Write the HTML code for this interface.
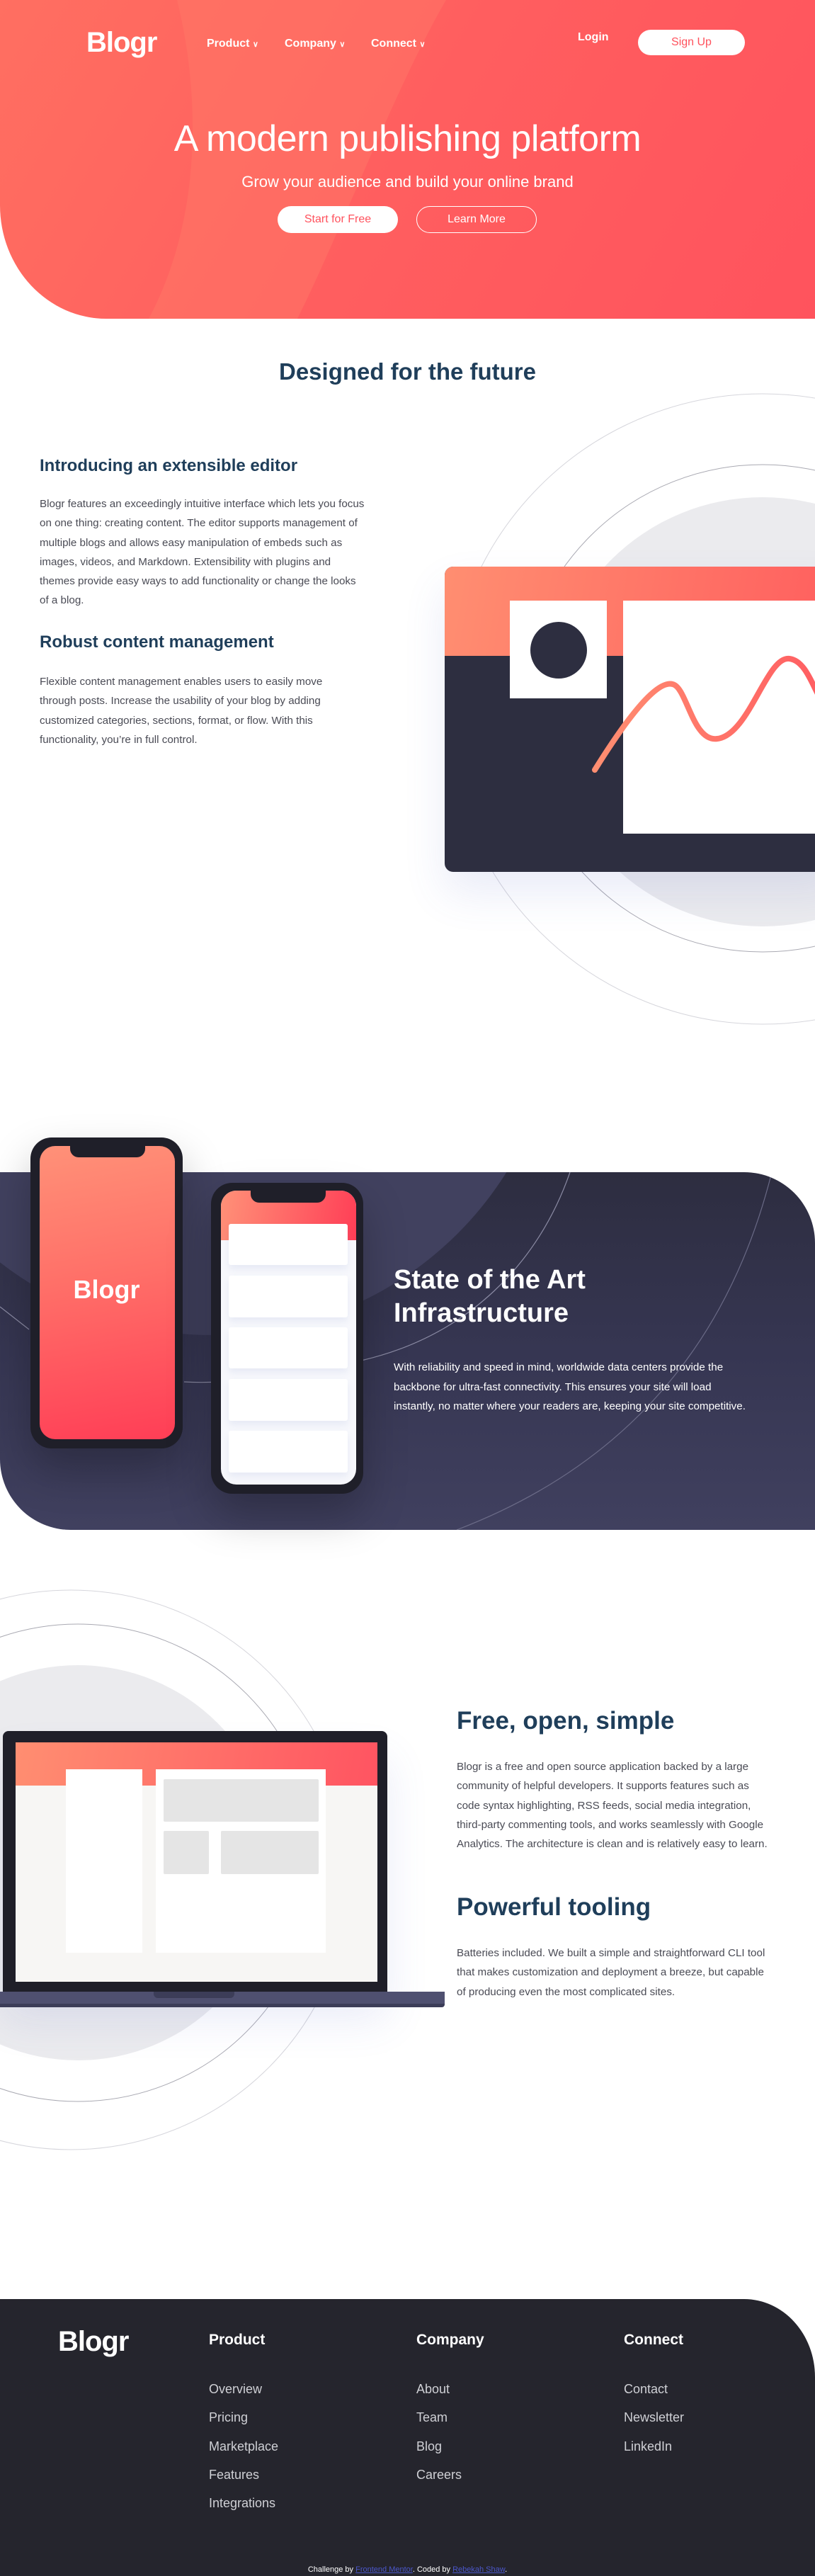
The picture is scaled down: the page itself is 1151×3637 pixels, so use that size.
<!DOCTYPE html>
<html><head><meta charset="utf-8">
<style>
*{margin:0;padding:0;box-sizing:border-box}
html,body{width:1151px;height:3637px;overflow:hidden;background:#fff;font-family:"Liberation Sans",sans-serif}
.a{position:absolute;white-space:nowrap}
#hero{position:absolute;left:0;top:0;width:1151px;height:450px;border-bottom-left-radius:150px 160px;overflow:hidden;background:linear-gradient(120deg,#ff6f61 0%,#ff5e5f 50%,#ff535d 100%)}
.nav{color:#fff;font-weight:bold;font-size:16px}
.h2{color:#1f3e5a;font-weight:bold}
.p{color:#4a4b55;font-size:15.2px;line-height:27.3px;white-space:normal}
.fl{color:#cfd0d5;font-size:18px}
.fh{color:#fff;font-weight:bold;font-size:21px}
</style></head><body>

<div id="hero">
<svg width="1151" height="450" style="position:absolute;left:0;top:0">
<path d="M250 0 C280 120 290 300 210 450 L420 450 C480 330 560 120 630 0 Z" fill="#ff7a68" opacity="0.45"/>
</svg>
<div class="a" style="left:122px;top:38px;color:#fff;font-weight:bold;font-size:40px;letter-spacing:-1px">Blogr</div>
<div class="a nav" style="left:292px;top:53px">Product <span style="font-size:11px">&#8744;</span></div>
<div class="a nav" style="left:402px;top:53px">Company <span style="font-size:11px">&#8744;</span></div>
<div class="a nav" style="left:524px;top:53px">Connect <span style="font-size:11px">&#8744;</span></div>
<div class="a nav" style="left:816px;top:44px">Login</div>
<div class="a" style="left:901px;top:42px;width:151px;height:36px;border-radius:18px;background:#fff;color:#ff525d;font-size:16px;text-align:center;line-height:36px">Sign Up</div>
<div class="a" style="left:0;width:1151px;text-align:center;top:166px;color:#fff;font-size:52px;letter-spacing:-0.5px">A modern publishing platform</div>
<div class="a" style="left:0;width:1151px;text-align:center;top:244px;color:#fff;font-size:22px">Grow your audience and build your online brand</div>
<div class="a" style="left:392px;top:291px;width:170px;height:38px;border-radius:19px;background:#fff;color:#ff525d;font-size:16px;text-align:center;line-height:38px">Start for Free</div>
<div class="a" style="left:588px;top:291px;width:170px;height:38px;border-radius:19px;border:1px solid #fff;color:#fff;font-size:16px;text-align:center;line-height:36px">Learn More</div>
</div>

<!-- section 2 -->
<div class="a h2" style="left:0;width:1151px;text-align:center;top:506px;font-size:33px">Designed for the future</div>
<svg class="a" style="left:0;top:540px" width="1151" height="950">
<circle cx="1077" cy="461" r="445" fill="none" stroke="#d6d6dc" stroke-width="1"/>
<circle cx="1077" cy="460" r="344" fill="none" stroke="#a9a9b2" stroke-width="1"/>
<circle cx="1077" cy="465" r="303" fill="#ebebee"/>
</svg>
<div class="a" style="left:628px;top:800px;width:560px;height:431px;border-radius:12px 0 0 12px;background:#2d2e40;overflow:hidden;box-shadow:0 30px 60px rgba(80,100,200,0.12)">
<div style="position:absolute;left:0;top:0;width:100%;height:126px;background:linear-gradient(100deg,#ff8e71,#ff5e5e)"></div>
<div style="position:absolute;left:92px;top:48px;width:137px;height:138px;background:#fff"></div>
<div style="position:absolute;left:121px;top:78px;width:80px;height:80px;border-radius:50%;background:#2d2e40"></div>
<div style="position:absolute;left:252px;top:48px;width:310px;height:329px;background:#fff"></div>
<svg style="position:absolute;left:0;top:0" width="560" height="431">
<defs><linearGradient id="wg" x1="0" x2="1"><stop offset="0" stop-color="#ff8e71"/><stop offset="1" stop-color="#ff5e62"/></linearGradient></defs>
<path d="M212 287 C260 210 300 160 322 166 C342 170 350 248 385 243 C430 238 455 125 487 130 C510 133 520 170 530 185" fill="none" stroke="url(#wg)" stroke-width="8" stroke-linecap="round"/>
</svg>
</div>
<div class="a h2" style="left:56px;top:644px;font-size:24px">Introducing an extensible editor</div>
<div class="a p" style="left:56px;top:698px;width:460px">Blogr features an exceedingly intuitive interface which lets you focus on one thing: creating content. The editor supports management of multiple blogs and allows easy manipulation of embeds such as images, videos, and Markdown. Extensibility with plugins and themes provide easy ways to add functionality or change the looks of a blog.</div>
<div class="a h2" style="left:56px;top:893px;font-size:24px">Robust content management</div>
<div class="a p" style="left:56px;top:949px;width:440px">Flexible content management enables users to easily move through posts. Increase the usability of your blog by adding customized categories, sections, format, or flow. With this functionality, you’re in full control.</div>

<!-- section 3 -->
<div class="a" style="left:0;top:1655px;width:1151px;height:505px;border-radius:0 100px 0 100px;overflow:hidden;background:linear-gradient(180deg,#2d2d40 0%,#363652 50%,#40405f 100%)">
<svg width="1151" height="505" style="position:absolute;left:0;top:0">
<circle cx="300" cy="-260" r="490" fill="#41415f"/>
<path d="M805 0 C760 130 660 230 514 265 C430 285 330 300 260 296" fill="none" stroke="#8a8aa3" stroke-width="1.2"/>
<path d="M0 190 L41 222" stroke="#8a8aa3" stroke-width="1.2"/>
<path d="M1090 0 C1040 200 920 400 645 505" fill="none" stroke="#6a6a86" stroke-width="1.2"/>
</svg>
</div>
<!-- phone 1 -->
<div class="a" style="left:43px;top:1606px;width:215px;height:439px;border-radius:30px;background:#1f1f29;box-shadow:0 30px 60px rgba(0,0,0,0.25)">
<div style="position:absolute;left:13px;top:12px;width:191px;height:414px;border-radius:22px;background:linear-gradient(170deg,#ff9178 0%,#ff6f68 45%,#ff3e56 100%)"></div>
<div style="position:absolute;left:56px;top:10px;width:106px;height:18px;border-radius:0 0 12px 12px;background:#1f1f29"></div>
<div style="position:absolute;left:0;width:215px;top:194px;text-align:center;color:#fff;font-weight:bold;font-size:36px">Blogr</div>
</div>
<!-- phone 2 -->
<div class="a" style="left:298px;top:1670px;width:215px;height:439px;border-radius:30px;background:#1f1f29;box-shadow:0 30px 60px rgba(0,0,0,0.25)">
<div style="position:absolute;left:14px;top:11px;width:191px;height:415px;border-radius:22px;background:#f7f8fc;overflow:hidden">
<div style="height:70px;background:linear-gradient(100deg,#ff9178,#ff3e56)"></div>
</div>
<div style="position:absolute;left:56px;top:10px;width:106px;height:18px;border-radius:0 0 12px 12px;background:#1f1f29"></div>
<div style="position:absolute;left:25px;top:58px;width:168px;height:58px;background:#fff;border-radius:3px;box-shadow:0 6px 10px rgba(120,140,200,0.12)"></div>
<div style="position:absolute;left:25px;top:131px;width:168px;height:59px;background:#fff;border-radius:3px;box-shadow:0 6px 10px rgba(120,140,200,0.12)"></div>
<div style="position:absolute;left:25px;top:204px;width:168px;height:58px;background:#fff;border-radius:3px;box-shadow:0 6px 10px rgba(120,140,200,0.12)"></div>
<div style="position:absolute;left:25px;top:277px;width:168px;height:59px;background:#fff;border-radius:3px;box-shadow:0 6px 10px rgba(120,140,200,0.12)"></div>
<div style="position:absolute;left:25px;top:350px;width:168px;height:59px;background:#fff;border-radius:3px;box-shadow:0 6px 10px rgba(120,140,200,0.12)"></div>
</div>
<div class="a" style="left:556px;top:1784px;color:#fff;font-weight:bold;font-size:38px;line-height:47px">State of the Art<br>Infrastructure</div>
<div class="a" style="left:556px;top:1917px;width:500px;color:#fff;font-size:15.2px;line-height:27.5px;white-space:normal">With reliability and speed in mind, worldwide data centers provide the backbone for ultra-fast connectivity. This ensures your site will load instantly, no matter where your readers are, keeping your site competitive.</div>

<!-- section 4 -->
<svg class="a" style="left:0;top:2230px" width="700" height="840">
<circle cx="100" cy="410" r="395" fill="none" stroke="#d6d6dc" stroke-width="1"/>
<circle cx="110" cy="400" r="337" fill="none" stroke="#a9a9b2" stroke-width="1"/>
<circle cx="110" cy="400" r="279" fill="#ebebee"/>
</svg>
<div class="a" style="left:4px;top:2444px;width:543px;height:368px;border-radius:8px 8px 0 0;background:#1f1f29;box-shadow:0 40px 60px rgba(80,100,200,0.12)">
<div style="position:absolute;left:18px;top:16px;width:511px;height:338px;background:#f7f6f4;overflow:hidden">
<div style="height:61px;background:linear-gradient(100deg,#ff8e71,#ff5461)"></div>
<div style="position:absolute;left:71px;top:38px;width:108px;height:259px;background:#fff"></div>
<div style="position:absolute;left:198px;top:38px;width:240px;height:259px;background:#fff"></div>
<div style="position:absolute;left:209px;top:52px;width:219px;height:60px;background:#e5e5e5;border-radius:2px"></div>
<div style="position:absolute;left:209px;top:125px;width:64px;height:61px;background:#e5e5e5;border-radius:2px"></div>
<div style="position:absolute;left:290px;top:125px;width:138px;height:61px;background:#e5e5e5;border-radius:2px"></div>
</div>
</div>
<div class="a" style="left:0;top:2812px;width:628px;height:22px;background:#4f5070;border-radius:0 0 4px 0;border-bottom:5px solid #3c3d58"></div>
<div class="a" style="left:217px;top:2812px;width:114px;height:9px;background:#3c3d58;border-radius:0 0 6px 6px"></div>

<div class="a h2" style="left:645px;top:2410px;font-size:35px">Free, open, simple</div>
<div class="a p" style="left:645px;top:2481px;width:445px">Blogr is a free and open source application backed by a large community of helpful developers. It supports features such as code syntax highlighting, RSS feeds, social media integration, third-party commenting tools, and works seamlessly with Google Analytics. The architecture is clean and is relatively easy to learn.</div>
<div class="a h2" style="left:645px;top:2673px;font-size:35px">Powerful tooling</div>
<div class="a p" style="left:645px;top:2744px;width:445px">Batteries included. We built a simple and straightforward CLI tool that makes customization and deployment a breeze, but capable of producing even the most complicated sites.</div>

<!-- footer -->
<div class="a" style="left:0;top:3246px;width:1151px;height:391px;background:#25252d;border-top-right-radius:100px 110px">
<div class="a" style="left:82px;top:38px;color:#fff;font-weight:bold;font-size:40px;letter-spacing:-1px">Blogr</div>
<div class="a fh" style="left:295px;top:46px">Product</div>
<div class="a fh" style="left:588px;top:46px">Company</div>
<div class="a fh" style="left:881px;top:46px">Connect</div>
<div class="a fl" style="left:295px;top:107px;line-height:40.3px">Overview<br>Pricing<br>Marketplace<br>Features<br>Integrations</div>
<div class="a fl" style="left:588px;top:107px;line-height:40.3px">About<br>Team<br>Blog<br>Careers</div>
<div class="a fl" style="left:881px;top:107px;line-height:40.3px">Contact<br>Newsletter<br>LinkedIn</div>
<div class="a" style="left:0;width:1151px;text-align:center;top:376px;color:#fff;font-size:11px">Challenge by <span style="color:#4a56c8;text-decoration:underline">Frontend Mentor</span>. Coded by <span style="color:#4a56c8;text-decoration:underline">Rebekah Shaw</span>.</div>
</div>
</body></html>
